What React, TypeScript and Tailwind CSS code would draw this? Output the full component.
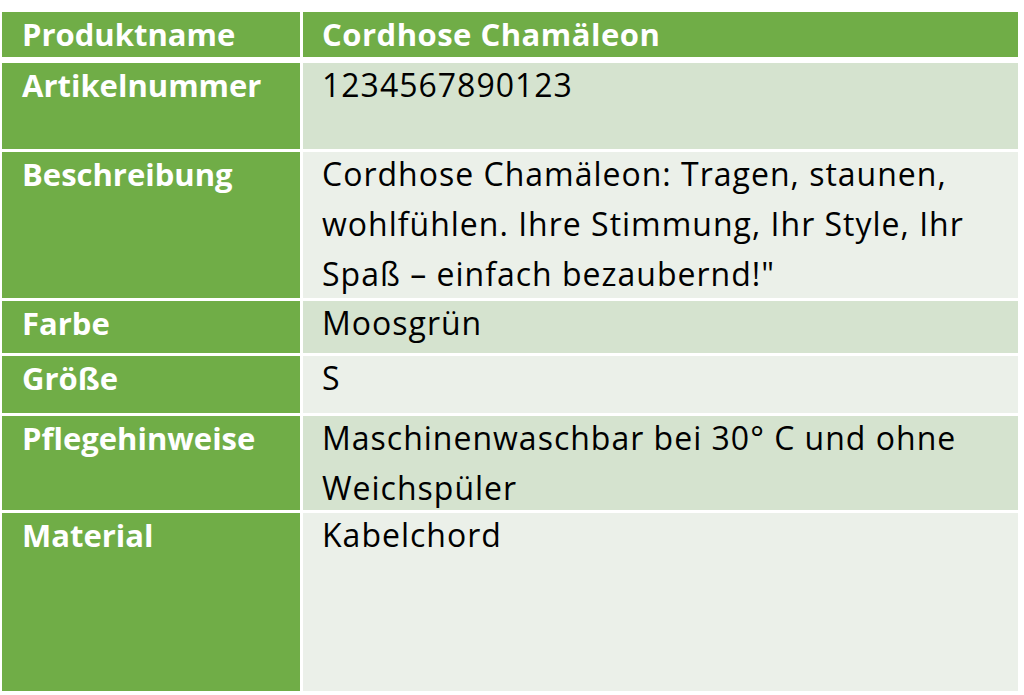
import React from 'react';

const FONT = "font-['Open_Sans','Noto_Sans',sans-serif] [font-variant-ligatures:none]";

type Row = {
  label: string;
  value: React.ReactNode;
  height: string;
  tone: 'dark' | 'light';
};

const rows: Row[] = [
  { label: 'Artikelnummer', value: '1234567890123', height: 'h-[86px]', tone: 'dark' },
  {
    label: 'Beschreibung',
    value: (
      <>
        Cordhose Chamäleon: Tragen, staunen,
        <br />
        wohlfühlen. Ihre Stimmung, Ihr Style, Ihr
        <br />
        Spaß – einfach bezaubernd!"
      </>
    ),
    height: 'h-[146px]',
    tone: 'light',
  },
  { label: 'Farbe', value: 'Moosgrün', height: 'h-[52px]', tone: 'dark' },
  { label: 'Größe', value: 'S', height: 'h-[57px]', tone: 'light' },
  {
    label: 'Pflegehinweise',
    value: (
      <>
        Maschinenwaschbar bei 30° C und ohne
        <br />
        Weichspüler
      </>
    ),
    height: 'h-[94px]',
    tone: 'dark',
  },
  { label: 'Material', value: 'Kabelchord', height: 'h-[178px]', tone: 'light' },
];

const labelText = '-mt-[3px] leading-[50px] text-[31px] font-bold text-white whitespace-nowrap';
const valueText = '-mt-[3px] leading-[50px] text-[32px] tracking-[1px] text-black whitespace-nowrap';

export default function App() {
  return (
    <div className={`w-[1024px] h-[695px] bg-white pt-[12px] pl-[2px] ${FONT}`}>
      <div className="flex flex-col gap-[3px] w-[1016px]">
        {/* header */}
        <div className="flex gap-[3px] h-[45px] mb-[3px]">
          <div className="w-[298px] bg-[#70ad47] pl-[20px] overflow-hidden">
            <div className={labelText}>Produktname</div>
          </div>
          <div className="flex-1 bg-[#70ad47] pl-[19px] overflow-hidden">
            <div className={`${labelText} tracking-[0.5px]`}>Cordhose Chamäleon</div>
          </div>
        </div>

        {rows.map(row => (
          <div key={row.label} className={`flex gap-[3px] ${row.height}`}>
            <div className="w-[298px] bg-[#70ad47] pl-[20px] overflow-hidden">
              <div className={labelText}>{row.label}</div>
            </div>
            <div
              className={`flex-1 pl-[19px] overflow-hidden ${row.tone === 'dark' ? 'bg-[#d5e3cf]' : 'bg-[#ebf0e9]'}`}
            >
              <div className={valueText}>{row.value}</div>
            </div>
          </div>
        ))}
      </div>
    </div>
  );
}
